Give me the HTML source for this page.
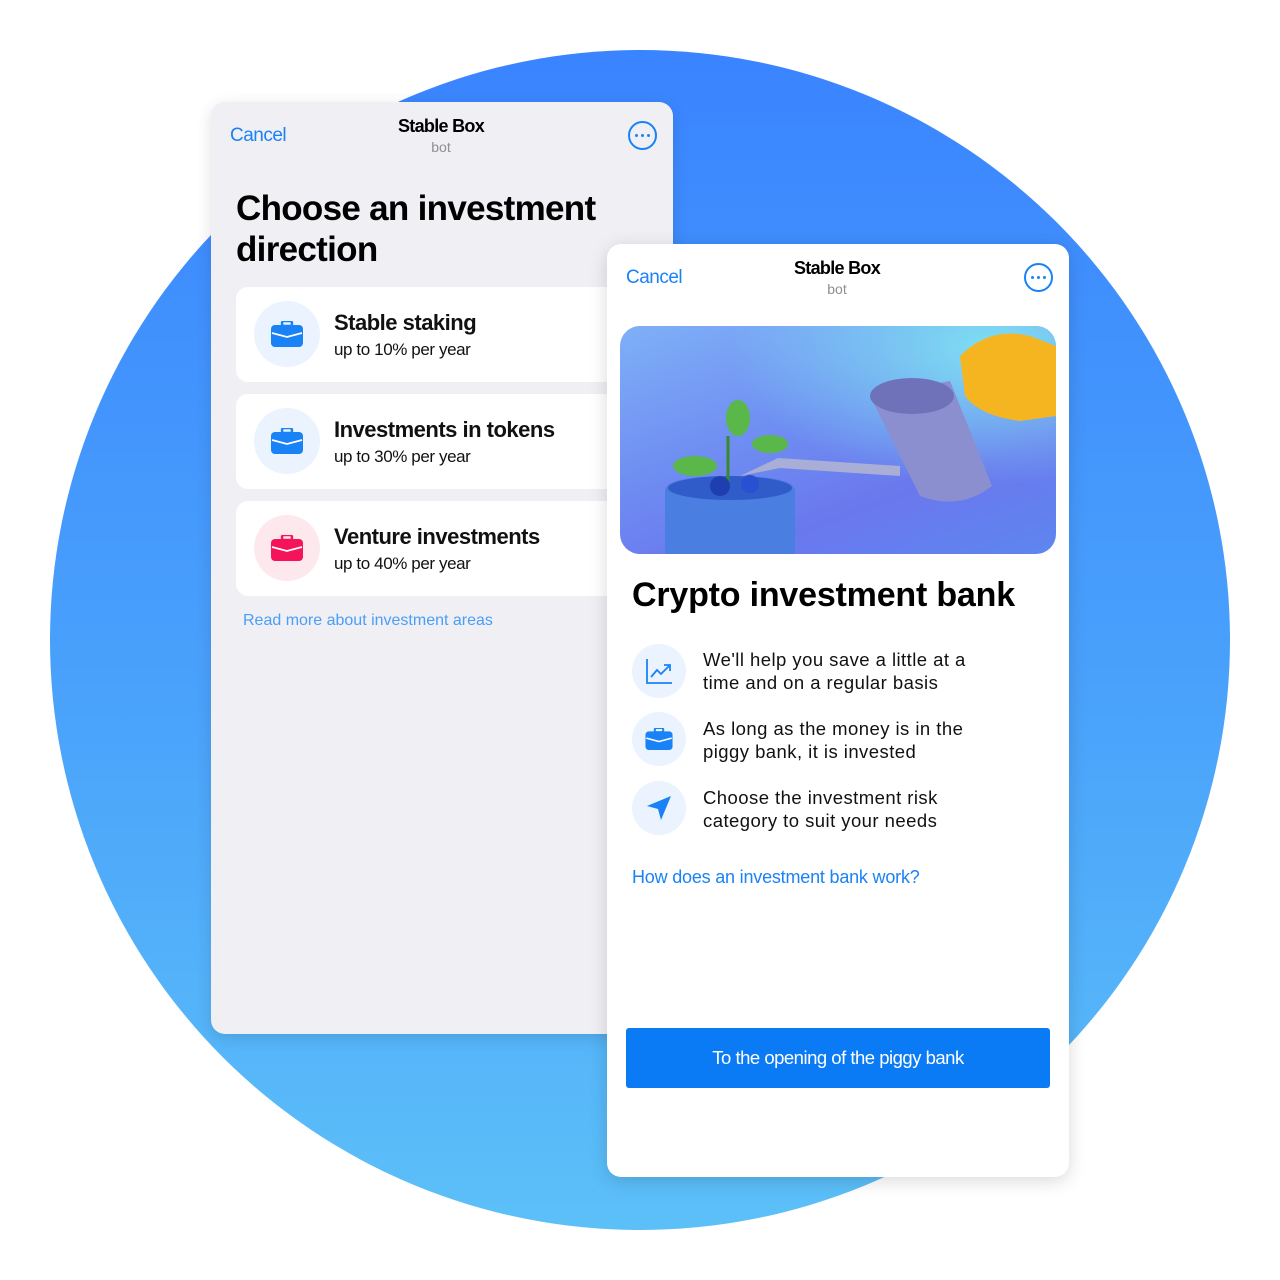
<!DOCTYPE html>
<html><head><meta charset="utf-8"><style>
*{margin:0;padding:0;box-sizing:border-box}
body{width:1280px;height:1280px;background:#fff;position:relative;overflow:hidden;font-family:"Liberation Sans",sans-serif}
.circle{position:absolute;left:50px;top:50px;width:1180px;height:1180px;border-radius:50%;background:linear-gradient(180deg,#3a84ff 0%,#4aa2fb 55%,#5cc0f8 100%)}
.panel{position:absolute;border-radius:14px;overflow:hidden}
.left{left:211px;top:102px;width:462px;height:932px;background:#efeff4;box-shadow:0 4px 16px rgba(0,0,0,.12)}
.right{left:607px;top:244px;width:462px;height:933px;background:#fff;box-shadow:0 4px 18px rgba(0,0,0,.15)}
.abs{position:absolute;white-space:nowrap}
.cancel{color:#1a82f7;font-size:19px;letter-spacing:-.5px}
.title{font-size:18px;font-weight:bold;color:#000;letter-spacing:-.7px;text-align:center;width:200px}
.sub{font-size:14px;color:#8e8e93;text-align:center;width:200px}
.dots{width:29px;height:29px;border:2px solid #1a82f7;border-radius:50%;display:flex;align-items:center;justify-content:center;gap:3px}
.dots i{width:3px;height:3px;background:#1a82f7;border-radius:50%}
.card{position:absolute;left:25px;width:460px;height:95px;background:#fff;border-radius:12px}
.ic{position:absolute;left:18px;top:14px;width:66px;height:66px;border-radius:50%;background:#eaf3fe;display:flex;align-items:center;justify-content:center}
.ct{position:absolute;left:98px;top:23px;font-size:22px;font-weight:bold;letter-spacing:-.5px;color:#111}
.cs{position:absolute;left:98px;top:53px;font-size:17px;color:#111;letter-spacing:-.4px}
.fi{position:absolute;left:25px;width:54px;height:54px;border-radius:50%;background:#eaf3fe;display:flex;align-items:center;justify-content:center}
.ft{position:absolute;left:96px;font-size:18.5px;line-height:23px;color:#111;letter-spacing:.45px}
</style></head><body>
<div class="circle"></div>

<div class="panel left">
  <div class="abs cancel" style="left:19px;top:23px">Cancel</div>
  <div class="abs title" style="left:130px;top:14px">Stable Box</div>
  <div class="abs sub" style="left:130px;top:37px">bot</div>
  <div class="abs dots" style="left:417px;top:19px"><i></i><i></i><i></i></div>
  <div class="abs" style="left:25px;top:86px;font-size:35px;font-weight:bold;line-height:41px;letter-spacing:-.7px;color:#000">Choose an investment<br>direction</div>
  <div class="card" style="top:185px"><div class="ic"><svg width="32" height="26" viewBox="0 0 32 26"><rect x="11" y="0" width="10" height="5" rx="2" fill="none" stroke="#1a82f7" stroke-width="2.4"/><rect x="0" y="4" width="32" height="22" rx="4" fill="#1a82f7"/><path d="M1 12 L16 16 L31 12" stroke="#fff" stroke-width="1.8" fill="none"/></svg></div><div class="ct">Stable staking</div><div class="cs">up to 10% per year</div></div>
  <div class="card" style="top:292px"><div class="ic"><svg width="32" height="26" viewBox="0 0 32 26"><rect x="11" y="0" width="10" height="5" rx="2" fill="none" stroke="#1a82f7" stroke-width="2.4"/><rect x="0" y="4" width="32" height="22" rx="4" fill="#1a82f7"/><path d="M1 12 L16 16 L31 12" stroke="#fff" stroke-width="1.8" fill="none"/></svg></div><div class="ct">Investments in tokens</div><div class="cs">up to 30% per year</div></div>
  <div class="card" style="top:399px"><div class="ic" style="background:#fde8ee"><svg width="32" height="26" viewBox="0 0 32 26"><rect x="11" y="0" width="10" height="5" rx="2" fill="none" stroke="#f5145c" stroke-width="2.4"/><rect x="0" y="4" width="32" height="22" rx="4" fill="#f5145c"/><path d="M1 12 L16 16 L31 12" stroke="#fff" stroke-width="1.8" fill="none"/></svg></div><div class="ct">Venture investments</div><div class="cs">up to 40% per year</div></div>
  <div class="abs" style="left:32px;top:510px;font-size:16px;color:#4a9ef8">Read more about investment areas</div>
</div>

<div class="panel right">
  <div class="abs cancel" style="left:19px;top:23px">Cancel</div>
  <div class="abs title" style="left:130px;top:14px">Stable Box</div>
  <div class="abs sub" style="left:130px;top:37px">bot</div>
  <div class="abs dots" style="left:417px;top:19px"><i></i><i></i><i></i></div>
  <div class="abs" style="left:13px;top:82px;width:436px;height:228px;border-radius:20px;overflow:hidden;background:linear-gradient(160deg,#7fb0f7 0%,#6f8ef2 40%,#6a78ee 70%,#5d86f0 100%)">
    <svg width="436" height="228" viewBox="0 0 436 228">
      <defs><radialGradient id="g" cx="85%" cy="10%" r="60%"><stop offset="0" stop-color="#7ee0f2"/><stop offset="1" stop-color="#7ee0f2" stop-opacity="0"/></radialGradient></defs>
      <rect width="436" height="228" fill="url(#g)"/>
      <path d="M45 165 Q45 150 110 150 Q175 150 175 165 L175 228 L45 228Z" fill="#4a7ee0"/>
      <ellipse cx="110" cy="162" rx="62" ry="12" fill="#2f5cc8"/>
      <path d="M120 150 L158 132 L280 140 L280 150 L160 142Z" fill="#a9aed6"/>
      <path d="M250 70 L330 55 L372 160 Q340 185 300 170Z" fill="#8b8fcf"/>
      <ellipse cx="292" cy="70" rx="42" ry="18" fill="#6f72b8"/>
      <path d="M340 30 Q370 0 410 10 L436 20 L436 90 L400 95 Q360 90 345 70Z" fill="#f5b521"/>
      <path d="M108 160 L108 110" stroke="#3a8a2a" stroke-width="3"/>
      <ellipse cx="118" cy="92" rx="12" ry="18" fill="#5ab84a"/>
      <ellipse cx="75" cy="140" rx="22" ry="10" fill="#5ab84a"/>
      <ellipse cx="150" cy="118" rx="18" ry="9" fill="#5ab84a"/>
      <circle cx="100" cy="160" r="10" fill="#1f3fb0"/><circle cx="130" cy="158" r="9" fill="#2850d0"/>
    </svg>
  </div>
  <div class="abs" style="left:25px;top:332px;font-size:34px;font-weight:bold;letter-spacing:-.2px;color:#000">Crypto investment bank</div>
  <div class="fi" style="top:400px"><svg width="28" height="28" viewBox="0 0 28 28" fill="none" stroke="#1a82f7" stroke-width="1.8"><path d="M2 2 V26 H27"/><path d="M6 20 L12 13 L16 17 L25 8"/><path d="M19 8 H25 V14"/></svg></div>
  <div class="ft" style="top:404px">We'll help you save a little at a<br>time and on a regular basis</div>
  <div class="fi" style="top:468px"><svg width="28" height="22" viewBox="0 0 32 26"><rect x="11" y="0" width="10" height="5" rx="2" fill="none" stroke="#1a82f7" stroke-width="2.4"/><rect x="0" y="4" width="32" height="22" rx="4" fill="#1a82f7"/><path d="M1 12 L16 16 L31 12" stroke="#fff" stroke-width="1.8" fill="none"/></svg></div>
  <div class="ft" style="top:473px">As long as the money is in the<br>piggy bank, it is invested</div>
  <div class="fi" style="top:537px"><svg width="26" height="26" viewBox="0 0 26 26"><path d="M25 1 L1 11 L12 14 L15 25Z" fill="#1a82f7"/></svg></div>
  <div class="ft" style="top:542px">Choose the investment risk<br>category to suit your needs</div>
  <div class="abs" style="left:25px;top:623px;font-size:18px;color:#1a82f7;letter-spacing:-.2px">How does an investment bank work?</div>
  <div class="abs" style="left:19px;top:784px;width:424px;height:60px;background:#0a7bf5;border-radius:3px;color:#fff;font-size:18.5px;letter-spacing:-.5px;display:flex;align-items:center;justify-content:center">To the opening of the piggy bank</div>
</div>
</body></html>
